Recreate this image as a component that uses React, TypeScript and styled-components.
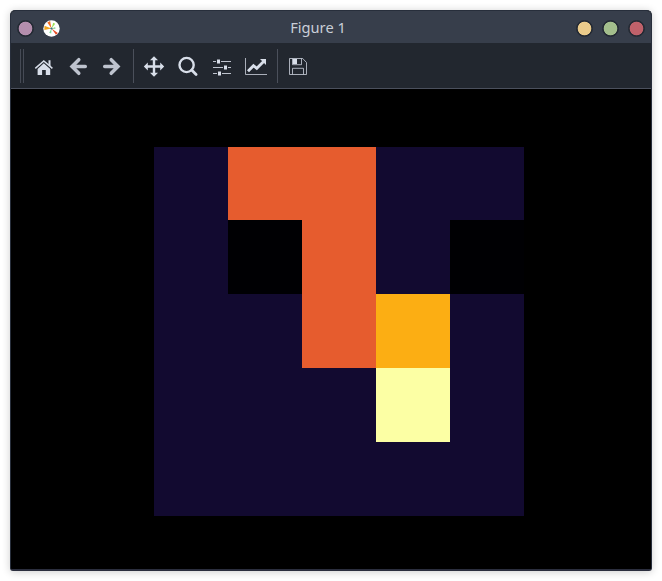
import React from "react";
import styled, { createGlobalStyle } from "styled-components";

const GlobalStyle = createGlobalStyle`
  *, *::before, *::after { box-sizing: border-box; }
  body { margin: 0; background: #fff; overflow: hidden; }
`;

const Desktop = styled.div`
  width: 662px;
  height: 581px;
  padding: 10px;
  font-family: "Noto Sans", sans-serif;
`;

const FigureWindow = styled.main`
  display: flex;
  flex-direction: column;
  width: 642px;
  height: 561px;
  border: 1px solid #272e3b;
  border-bottom: 2px solid #2b2e3e;
  border-radius: 5px 5px 3px 3px;
  background: #000;
  overflow: hidden;
  box-shadow: 0 1px 9px rgba(0, 0, 0, 0.2);
`;

const TitleBar = styled.header`
  display: grid;
  grid-template-columns: 89px 1fr 111px;
  align-items: center;
  flex: 0 0 32px;
  padding: 3px 6px 0;
  background: #373e4b;
`;

const Title = styled.h1`
  margin: 0 0 3px -4px;
  color: #c9ced8;
  font-size: 14.67px;
  font-weight: 400;
  line-height: 20px;
  text-align: center;
`;

const WindowControls = styled.div<{ $end?: boolean }>`
  display: flex;
  gap: 9px;
  justify-content: ${(p) => (p.$end ? "flex-end" : "flex-start")};
`;

const RoundButton = styled.button<{ $color: string }>`
  width: 17px;
  height: 17px;
  padding: 0;
  border: 1.5px solid #242a34;
  border-width: 1.5px;
  border-radius: 50%;
  background: radial-gradient(circle, ${(p) => p.$color} 6.4px, #242a34 7.2px) border-box;
`;

const AppIcon = styled.svg`
  display: block;
  width: 17px;
  height: 17px;
`;

const Toolbar = styled.nav`
  display: flex;
  align-items: center;
  flex: 0 0 46px;
  padding-left: 9px;
  border-bottom: 1px solid #4b505d;
  background: #22272f;
  color: #d8dee9;
`;

const Handle = styled.div`
  width: 4px;
  height: 34px;
  margin-right: 3px;
  border: solid #464b56;
  border-width: 0 1px;
`;

const Separator = styled.div`
  width: 1px;
  height: 34px;
  margin: 0 3px 0 4px;
  background: #4b505b;
`;

const ToolButton = styled.button<{ $muted?: boolean }>`
  display: grid;
  place-items: center;
  width: 34px;
  height: 34px;
  padding: 0;
  border: 0;
  background: none;
  color: ${(p) => (p.$muted ? "#bec3ce" : "#d8dee9")};
`;

const ToolIcon = styled.svg`
  width: 24px;
  height: 24px;
  fill: none;
  stroke: currentColor;
`;

const Canvas = styled.section`
  flex: 1;
  padding: 58px 0 0 143px;
  background: #000;
`;

const Heatmap = styled.div`
  display: grid;
  grid-template-columns: repeat(5, 74px);
  grid-template-rows: 73px repeat(4, 74px);
  width: 370px;
`;

const Cell = styled.div<{ $color: string }>`
  background: ${(p) => p.$color};
`;

const palette = ["#000003", "#120a30", "#e65c2e", "#fcae13", "#fcffa4"];
const values = [
  [1, 2, 2, 1, 1],
  [1, 0, 2, 1, 0],
  [1, 1, 2, 3, 1],
  [1, 1, 1, 4, 1],
  [1, 1, 1, 1, 1],
];

type ToolProps = { label: string; muted?: boolean; children: React.ReactNode };

function Tool({ label, muted, children }: ToolProps) {
  return (
    <ToolButton aria-label={label} $muted={muted}>
      <ToolIcon viewBox="0 0 24 24" aria-hidden="true">{children}</ToolIcon>
    </ToolButton>
  );
}

function MatplotlibIcon() {
  return (
    <AppIcon viewBox="0 0 17 17" aria-hidden="true">
      <circle cx="8.5" cy="8.5" r="8.2" fill="#fff" />
      <path d="M8.5 8.5 4.3 2.4 7.1 1Z" fill="#f46d22" />
      <path d="M8.5 8.5 1.3 10 1.5 5.8Z" fill="#f3a51f" />
      <path d="M8.5 8.5 10.2 2.8 12.2 3.8Z" fill="#9ce052" />
      <path d="m8.5 8.5-.3 5-2-.7Z" fill="#79df95" />
      <path d="m8.5 8.5 6.3 4.4-1.8 1.9Z" fill="#e64b24" />
      <path d="m8.5 8.5 3.7-1.3.2 1.6Z" fill="#70ca75" />
      <circle cx="8.5" cy="8.5" r="1.1" fill="#35658e" />
    </AppIcon>
  );
}

export default function App() {
  return (
    <>
      <GlobalStyle />
      <Desktop>
        <FigureWindow>
          <TitleBar>
            <WindowControls>
              <RoundButton $color="#b48ead" aria-label="Window menu" />
              <MatplotlibIcon />
            </WindowControls>
            <Title>Figure 1</Title>
            <WindowControls $end>
              <RoundButton $color="#ebcb8b" aria-label="Minimize" />
              <RoundButton $color="#a3be8c" aria-label="Maximize" />
              <RoundButton $color="#bf616a" aria-label="Close" />
            </WindowControls>
          </TitleBar>
          <Toolbar>
            <Handle />
            <Tool label="Home">
              <path d="m3.3 14.4 8.5-7.4 8.6 7.4" strokeWidth="1.5" />
              <path d="M16.5 6.2h2v6.3l-2-1.8Z" fill="currentColor" stroke="none" />
              <path d="m11.8 9.3 6.4 5.6V21h-4.4v-5h-3.7v5H5.6v-6Z" fill="currentColor" stroke="none" />
            </Tool>
            <Tool label="Back" muted>
              <path d="M6 12.5h13.3M12.8 5.7 6 12.5l6.8 6.8" strokeWidth="3.5" strokeLinecap="round" />
            </Tool>
            <Tool label="Forward" muted>
              <path d="M4.7 12.5H18M11.2 5.7l6.8 6.8-6.8 6.8" strokeWidth="3.5" strokeLinecap="round" />
            </Tool>
            <Separator />
            <Tool label="Pan">
              <path d="M12 4v17M3.5 12.5h17" strokeWidth="2.4" />
              <path d="m12 2.3 4 4H8Zm0 20.4 4-4H8ZM1.8 12.5l4-4v8Zm20.4 0-4-4v8Z" fill="currentColor" stroke="none" />
            </Tool>
            <Tool label="Zoom">
              <circle cx="10.6" cy="11" r="7.1" strokeWidth="2.4" />
              <path d="m15.7 16.1 4.4 4.4" strokeWidth="2.8" strokeLinecap="round" />
            </Tool>
            <Tool label="Configure subplots">
              <path d="M3 7.5h18M3 13.5h18M3 19.5h18" strokeWidth="1" opacity=".85" />
              <path d="M6 5h5v5H6Zm7 6h5v5h-5Zm-6 6h5v5H7Z" fill="#22272f" stroke="none" />
              <path d="M7 5.5h3v4H7Zm7 6h3v4h-3Zm-6 6h3v4H8Z" fill="currentColor" stroke="none" />
            </Tool>
            <Tool label="Edit curves">
              <path d="M1.5 4v16.5H23" strokeWidth="1" opacity=".75" />
              <path d="m4 17.3 5.5-5.6 3.3 2.6 6.8-6.7" strokeWidth="2.8" />
              <path d="M16 5h6v6Z" fill="currentColor" stroke="none" />
            </Tool>
            <Separator />
            <Tool label="Save">
              <path d="M3.5 4.5h13.2l3.8 4v12h-17ZM6.5 20.3v-6h11v6M6.5 4.7v6h9v-6" strokeWidth="1" opacity=".75" />
              <path d="M7 5h4v5H7Z" fill="currentColor" stroke="none" />
            </Tool>
          </Toolbar>
          <Canvas>
            <Heatmap>
              {values.flatMap((row, y) =>
                row.map((value, x) => <Cell key={`${x}-${y}`} $color={palette[value]} />)
              )}
            </Heatmap>
          </Canvas>
        </FigureWindow>
      </Desktop>
    </>
  );
}
